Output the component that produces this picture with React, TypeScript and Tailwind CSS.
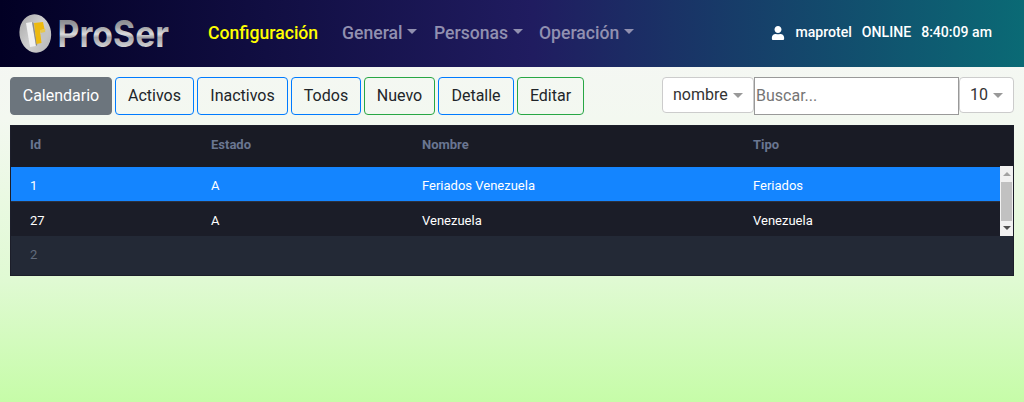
import { FaUser } from "react-icons/fa";

function Caret({ className = "" }: { className?: string }) {
  return (
    <span
      className={`inline-block h-0 w-0 border-x-transparent border-b-0 border-solid ${className}`}
    />
  );
}

function Logo() {
  return (
    <svg width="156" height="50" viewBox="0 0 156 50" className="block shrink-0 overflow-visible">
      <defs>
        <linearGradient id="metal" gradientUnits="userSpaceOnUse" x1="0" y1="10" x2="0" y2="38">
          <stop offset="0" stopColor="#85868c" />
          <stop offset="0.3" stopColor="#a2a3a6" />
          <stop offset="0.54" stopColor="#dcdcdd" />
          <stop offset="0.66" stopColor="#a3a3a8" />
          <stop offset="1" stopColor="#d2d2d4" />
        </linearGradient>
        <linearGradient id="disc" x1="0" y1="0" x2="1" y2="1">
          <stop offset="0" stopColor="#a6a6a6" />
          <stop offset="0.5" stopColor="#d0d0d0" />
          <stop offset="1" stopColor="#b4b4b4" />
        </linearGradient>
      </defs>
      <ellipse cx="17.3" cy="24.5" rx="15.8" ry="19.2" fill="url(#disc)" transform="rotate(-8 17.3 24.5)" />
      <path d="M8 14 L14 13 L18 37 L12 38 Z" fill="#f1f1f1" />
      <path d="M14 13 L18 37 L19.3 36 L15.6 14 Z" fill="#8c8c8c" />
      <path d="M16 14 L25 13 L26.5 20 L22 21.5 L23.5 34 L18.5 35 Z" fill="#edb90f" />
      <path d="M22.5 23 L28 22 L29 28 L24 30 Z" fill="#c4c4c2" />
      <path d="M22 21 L27.5 20 L27 23 L22.5 24 Z" fill="#e8c84b" />
      <text
        x="39.5"
        y="38"
        textLength="111.5"
        lengthAdjust="spacingAndGlyphs"
        fontSize="37"
        fill="url(#metal)"
        className="font-['Inter',sans-serif] font-bold"
      >
        ProSer
      </text>
    </svg>
  );
}

const buttons = [
  { label: "Calendario", style: "w-[102px] border-[#6c757d] bg-[#6c757d] text-white" },
  { label: "Activos", style: "w-[79px] border-[#007bff] text-[#212529]" },
  { label: "Inactivos", style: "w-[91px] border-[#007bff] text-[#212529]" },
  { label: "Todos", style: "w-[70px] border-[#007bff] text-[#212529]" },
  { label: "Nuevo", style: "w-[71px] border-[#28a745] text-[#212529]" },
  { label: "Detalle", style: "w-[76px] border-[#007bff] text-[#212529]" },
  { label: "Editar", style: "w-[67px] border-[#28a745] text-[#212529]" },
];

const menus = [
  { label: "General", style: "w-[92px]" },
  { label: "Personas", style: "w-[105px]" },
  { label: "Operación", style: "w-[100px]" },
];

const columns = "grid grid-cols-[181px_211px_331px_1fr] pl-[19px]";

export default function App() {
  return (
    <div className="flex h-[402px] w-full flex-col bg-[linear-gradient(180deg,#f6f6f6_0px,#f3f8f0_120px,#e0fad3_280px,#c6fca8_402px)] font-['Roboto',sans-serif] text-[#212529]">
      <nav className="flex h-[67px] shrink-0 items-center bg-[linear-gradient(90deg,#020024_0%,#201c60_52%,#0a6a75_100%)] pl-[18px]">
        <Logo />
        <div className="flex w-full items-center pl-[34px] text-[17.6px] font-medium">
          <a className="w-[134px] shrink-0 text-[#ffff00]">Configuración</a>
          {menus.map((m) => (
            <a key={m.label} className={`flex shrink-0 items-center text-[#9190b0] ${m.style}`}>
              {m.label}
              <Caret className="mb-[3px] ml-[4.5px] border-x-[5.4px] border-t-[5.4px] border-t-[#9190b0]" />
            </a>
          ))}
        </div>
        <div className="flex shrink-0 items-center gap-[10px] pr-8 pb-px text-[14.1px] font-medium whitespace-nowrap text-white">
          <FaUser className="size-[14px]" />
          <span>maprotel</span>
          <span>ONLINE</span>
          <span>8:40:09 am</span>
        </div>
      </nav>

      <div className="mt-[10px] flex shrink-0 items-start px-[10px]">
        <div className="flex gap-[3px]">
          {buttons.map((b) => (
            <button
              key={b.label}
              className={`h-[38px] rounded border text-base leading-6 ${b.style}`}
            >
              {b.label}
            </button>
          ))}
        </div>
        <div className="ml-auto flex items-start">
          <div className="flex h-9 w-[92px] items-center rounded border border-[#cccccc] bg-white pl-[10px] text-base text-[#333333]">
            nombre
            <Caret className="ml-[5px] border-x-[5px] border-t-[5px] border-t-[#999999]" />
          </div>
          <input
            placeholder="Buscar..."
            className="h-[38px] w-[205px] border border-[#999999] bg-white px-px pb-[2px] text-base outline-none placeholder:text-[#757575]"
          />
          <div className="flex h-9 w-[55px] items-center rounded border border-[#cccccc] bg-white pl-[10px] text-base text-[#333333]">
            10
            <Caret className="ml-[5px] border-x-[5px] border-t-[5px] border-t-[#999999]" />
          </div>
        </div>
      </div>

      <div className="mx-[10px] mt-[10px] flex h-[151px] shrink-0 flex-col border border-[#1c1e2a] bg-[#191b25] text-[13px]">
        <div className={`${columns} h-[41px] items-center pb-1 font-bold text-[#6a7691]`}>
          <span>Id</span>
          <span>Estado</span>
          <span>Nombre</span>
          <span>Tipo</span>
        </div>
        <div className="flex h-[69px]">
          <div className="flex-1 text-white">
            <div className={`${columns} h-[34px] items-center bg-[#1485ff] pt-[3px]`}>
              <span>1</span>
              <span>A</span>
              <span>Feriados Venezuela</span>
              <span>Feriados</span>
            </div>
            <div className={`${columns} h-[35px] items-center border-t border-[#2d303c] bg-[#1b1d28] pt-[4px]`}>
              <span>27</span>
              <span>A</span>
              <span>Venezuela</span>
              <span>Venezuela</span>
            </div>
          </div>
          <div className="-mt-px flex h-[70px] w-[13px] flex-col items-center justify-between bg-[#f1f1f1] py-[6px]">
            <Caret className="rotate-180 border-x-[4px] border-t-[4px] border-t-[#a3a3a3]" />
            <span className="h-[39px] w-[11px] bg-[#c1c1c1]" />
            <Caret className="border-x-[4px] border-t-[4px] border-t-[#505050]" />
          </div>
        </div>
        <div className="flex flex-1 items-center bg-[#232936] pb-[1px] pl-[19px] text-[#626b7c]">2</div>
      </div>
    </div>
  );
}
